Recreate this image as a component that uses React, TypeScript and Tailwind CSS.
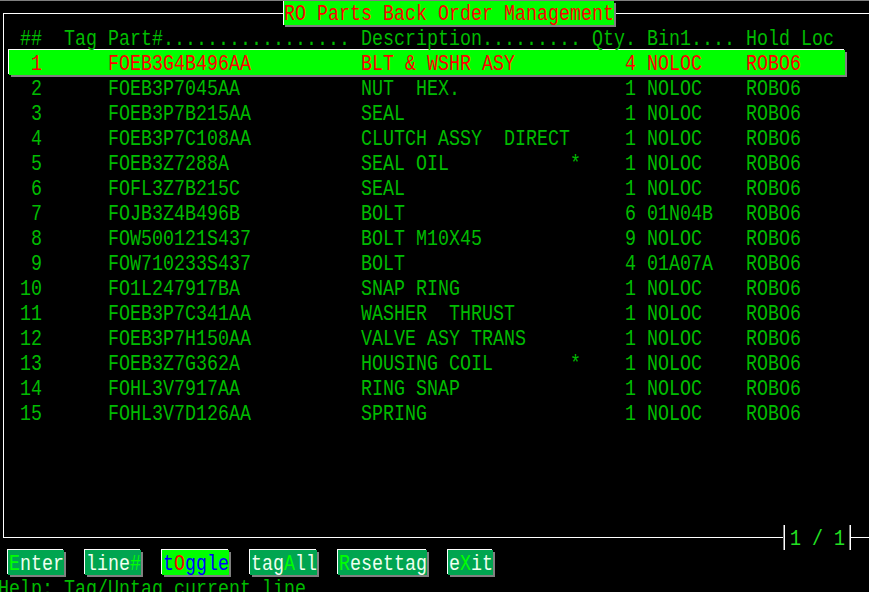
import React from "react";

type Row = [string, string, string, string, string, string, string];

const rows: Row[] = [
  ["1", "FOEB3G4B496AA", "BLT & WSHR ASY", "", "4", "NOLOC", "ROBO6"],
  ["2", "FOEB3P7045AA", "NUT  HEX.", "", "1", "NOLOC", "ROBO6"],
  ["3", "FOEB3P7B215AA", "SEAL", "", "1", "NOLOC", "ROBO6"],
  ["4", "FOEB3P7C108AA", "CLUTCH ASSY  DIRECT", "", "1", "NOLOC", "ROBO6"],
  ["5", "FOEB3Z7288A", "SEAL OIL", "*", "1", "NOLOC", "ROBO6"],
  ["6", "FOFL3Z7B215C", "SEAL", "", "1", "NOLOC", "ROBO6"],
  ["7", "FOJB3Z4B496B", "BOLT", "", "6", "01N04B", "ROBO6"],
  ["8", "FOW500121S437", "BOLT M10X45", "", "9", "NOLOC", "ROBO6"],
  ["9", "FOW710233S437", "BOLT", "", "4", "01A07A", "ROBO6"],
  ["10", "FO1L247917BA", "SNAP RING", "", "1", "NOLOC", "ROBO6"],
  ["11", "FOEB3P7C341AA", "WASHER  THRUST", "", "1", "NOLOC", "ROBO6"],
  ["12", "FOEB3P7H150AA", "VALVE ASY TRANS", "", "1", "NOLOC", "ROBO6"],
  ["13", "FOEB3Z7G362A", "HOUSING COIL", "*", "1", "NOLOC", "ROBO6"],
  ["14", "FOHL3V7917AA", "RING SNAP", "", "1", "NOLOC", "ROBO6"],
  ["15", "FOHL3V7D126AA", "SPRING", "", "1", "NOLOC", "ROBO6"],
];

const header =
  "##  Tag Part#" + ".".repeat(17) + " Description" + ".".repeat(9) + " Qty. Bin1.... Hold Loc";

function line(r: Row) {
  return (
    r[0].padStart(2) +
    " ".repeat(6) +
    r[1].padEnd(23) +
    r[2].padEnd(19) +
    (r[3] || " ") +
    r[4].padStart(5) +
    " " +
    r[5].padEnd(9) +
    r[6]
  );
}

// one terminal text line, stretched a little to match the tall terminal font
function T({ children, className = "" }: { children: React.ReactNode; className?: string }) {
  return (
    <div className={`h-[25px] leading-[25px] whitespace-pre scale-y-[1.2] origin-[0_2px] ${className}`}>
      {children}
    </div>
  );
}

const buttons: { pre: string; key: string; post: string }[] = [
  { pre: "", key: "E", post: "nter" },
  { pre: "line", key: "#", post: "" },
  { pre: "t", key: "O", post: "ggle" },
  { pre: "tag", key: "A", post: "ll" },
  { pre: "", key: "R", post: "esettag" },
  { pre: "e", key: "X", post: "it" },
];

export default function App() {
  return (
    <div className="w-[869px] h-[592px] overflow-hidden bg-black font-['Liberation_Mono',monospace] text-[18.33px] text-[#00bb00] shadow-[inset_0_1px_0_#7f7f7f]">
      {/* title row */}
      <div className="flex h-[25px]">
        <div className="ml-[3px] mt-[13px] w-[280px] h-[12px] border-t border-l border-white" />
        <div className="mt-[1px] h-[24px] w-[331px] border-l border-white bg-[#00ff00] text-[#ff0000] shadow-[2px_2px_0_#808080]">
          <T className="-mt-[1px]">RO Parts Back Order Management</T>
        </div>
        <div className="ml-[2px] mt-[13px] flex-1 border-t border-white" />
      </div>

      {/* framed list */}
      <div className="ml-[3px] h-[500px] border-l border-white">
        <div className="pl-[16px]">
          <T>{header}</T>
        </div>
        {rows.map((r, i) =>
          i === 0 ? (
            <div
              key={i}
              className="ml-[5px] w-[836px] h-[25px] bg-[#00ff00] text-[#ff0000] pl-[11px] shadow-[-1px_-1px_0_#fff,2px_2px_0_#808080]"
            >
              <T>{line(r)}</T>
            </div>
          ) : (
            <div key={i} className="pl-[16px]">
              <T>{line(r)}</T>
            </div>
          )
        )}
      </div>

      {/* frame bottom with page counter */}
      <div className="flex h-[25px]">
        <div className="ml-[3px] w-[780px] h-[13px] border-l border-b border-white" />
        <div className="w-[2px] h-[25px] border-l border-r border-l-[#808080] border-r-white" />
        <div className="w-[64px] pl-[5px] text-[#22e022]">
          <T>1 / 1</T>
        </div>
        <div className="w-[2px] h-[25px] border-l border-r border-l-[#808080] border-r-white" />
        <div className="flex-1 h-[13px] border-b border-white" />
      </div>

      {/* function keys */}
      <div className="flex h-[25px] ml-[8px] gap-[21px]">
        {buttons.map((b, i) => {
          const active = i === 2;
          return (
            <div
              key={i}
              className={`pl-[1px] shadow-[-1px_-1px_0_#fff,2px_2px_0_#808080] ${
                active ? "bg-[#00ff00] text-[#0000ff]" : "bg-[#00a550] text-[#f0fff0]"
              }`}
            >
              <T>
                {b.pre}
                <span className={active ? "text-[#ff0000]" : "text-[#00ff00]"}>{b.key}</span>
                {b.post}
              </T>
            </div>
          );
        })}
      </div>

      <div className="-ml-[2px]">
        <T>Help: Tag/Untag current line</T>
      </div>
    </div>
  );
}
